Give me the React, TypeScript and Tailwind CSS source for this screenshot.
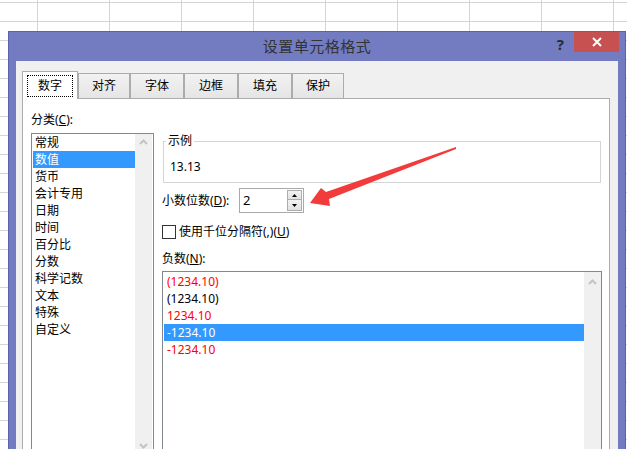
const categories = ['常规', '数值', '货币', '会计专用', '日期', '时间', '百分比', '分数', '科学记数', '文本', '特殊', '自定义'];

const negatives = [
    { text: '(1234.10)', red: true },
    { text: '(1234.10)', red: false },
    { text: '1234.10', red: true },
    { text: '-1234.10', red: false, selected: true },
    { text: '-1234.10', red: true },
];

const tabs = [
    { label: '对齐', w: 'w-[52px]' },
    { label: '字体', w: 'w-[54px]' },
    { label: '边框', w: 'w-[54px]' },
    { label: '填充', w: 'w-[54px]' },
    { label: '保护', w: 'w-[52px]' },
];

function Caret({ down }: { down?: boolean }) {
    return (
        <svg width="9" height="6" viewBox="0 0 9 6" className={down ? 'rotate-180' : ''}>
            <path d="M1 5 L4.5 1.5 L8 5" fill="none" stroke="#c4c4c4" strokeWidth="2" />
        </svg>
    );
}

function Scrollbar() {
    return (
        <div className="w-[17px] bg-[#f0f0f0] flex flex-col items-center justify-between py-[5px] shrink-0">
            <Caret />
            <Caret down />
        </div>
    );
}

export default function App() {
    return (
        <div className="relative w-[627px] h-[449px] overflow-hidden bg-white bg-[linear-gradient(to_right,#d4d4d4_1px,transparent_1px),linear-gradient(to_bottom,#d4d4d4_1px,transparent_1px)] bg-[size:72px_19px] bg-[position:37px_2px] font-['Noto_Sans','Noto_Sans_CJK_SC',sans-serif] text-[12px] text-black">
            {/* Dialog window */}
            <div className="absolute left-[8px] top-[31px] w-[618px] h-[440px] bg-[#737cc1] border border-[#5c63a8] flex flex-col">
                {/* Title bar */}
                <div className="relative h-[29px] flex items-center justify-center shrink-0">
                    <span className="text-[15px] text-[#333] tracking-[0.5px]">设置单元格格式</span>
                    <span className="absolute right-[61px] top-[1px] text-[15px] font-bold text-[#2b2b2b]">?</span>
                    <div className="absolute right-[6px] top-0 w-[45px] h-[20px] bg-[#c75050] flex items-center justify-center">
                        <svg width="10" height="10" viewBox="0 0 10 10">
                            <path d="M1 1 L9 9 M9 1 L1 9" stroke="#fff" strokeWidth="2" />
                        </svg>
                    </div>
                </div>

                {/* Body */}
                <div className="flex-1 mx-[7px] bg-[#f0f0f0] pt-[10px] pl-[6px] pr-[8px] flex flex-col">
                    {/* Tabs */}
                    <div className="flex items-end h-[27px] shrink-0">
                        <div className="relative z-10 w-[56px] h-[28px] -mb-[1px] bg-white border-x border-t border-[#acacac] flex items-center justify-center">
                            <span className="border border-dotted border-black px-[10px] py-[2px] leading-[16px]">数字</span>
                        </div>
                        {tabs.map((t) => (
                            <div
                                key={t.label}
                                className={`${t.w} h-[25px] bg-[linear-gradient(#f2f2f2,#e5e5e5)] border-x border-t border-[#acacac] flex items-center justify-center`}
                            >
                                {t.label}
                            </div>
                        ))}
                    </div>

                    {/* Tab panel */}
                    <div className="flex-1 bg-white border border-b-0 border-[#acacac] pl-[8px] flex">
                        {/* Category list */}
                        <div className="w-[123px] pt-[12px] shrink-0">
                            <div className="leading-[18px]">
                                分类(<span className="underline">C</span>):
                            </div>
                            <div className="mt-[4px] h-[322px] border border-[#828790] flex">
                                <div className="flex-1">
                                    {categories.map((c) => (
                                        <div
                                            key={c}
                                            className={
                                                c === '数值'
                                                    ? 'ml-[1px] pl-[2px] leading-[17px] bg-[#3399ff] text-white'
                                                    : 'ml-[1px] pl-[2px] leading-[17px]'
                                            }
                                        >
                                            {c}
                                        </div>
                                    ))}
                                </div>
                                <Scrollbar />
                                <div className="w-[1px]" />
                            </div>
                        </div>

                        {/* Right side */}
                        <div className="ml-[8px] w-[440px] pt-[34px]">
                            <fieldset className="ml-[1px] w-[438px] h-[50px] border border-[#d5d5d5]">
                                <legend className="ml-[2px] px-[2px] leading-[16px]">示例</legend>
                                <div className="pl-[6px] pt-[10px] leading-[16px]">13.13</div>
                            </fieldset>

                            <div className="mt-[5px] flex items-center h-[25px]">
                                <span className="w-[77px]">
                                    小数位数(<span className="underline">D</span>):
                                </span>
                                <div className="relative w-[65px] h-[25px] border border-[#a9a9a9] flex items-center pl-[3px]">
                                    <span className="text-[13px]">2</span>
                                    <div className="absolute right-[1px] top-[1px] w-[15px] flex flex-col">
                                        <div className="h-[10px] border border-[#acacac] bg-[linear-gradient(#f2f2f2,#e2e2e2)] flex items-center justify-center">
                                            <svg width="5" height="3" viewBox="0 0 5 3"><path d="M0 3 L2.5 0 L5 3 Z" fill="#000" /></svg>
                                        </div>
                                        <div className="h-[11px] border border-t-0 border-[#acacac] bg-[linear-gradient(#f2f2f2,#e2e2e2)] flex items-center justify-center">
                                            <svg width="5" height="3" viewBox="0 0 5 3"><path d="M0 0 L2.5 3 L5 0 Z" fill="#000" /></svg>
                                        </div>
                                    </div>
                                </div>
                            </div>

                            <div className="mt-[12px] flex items-center gap-[3px]">
                                <div className="w-[14px] h-[14px] border border-[#333] bg-white" />
                                <span className="leading-[14px]">
                                    使用千位分隔符(,)(<span className="underline">U</span>)
                                </span>
                            </div>

                            <div className="mt-[11px] leading-[18px]">
                                负数(<span className="underline">N</span>):
                            </div>
                            <div className="mt-[3px] h-[200px] border border-[#828790] flex">
                                <div className="flex-1 pt-[1px]">
                                    {negatives.map((n, i) => (
                                        <div
                                            key={i}
                                            className={
                                                n.selected
                                                    ? 'ml-[1px] pl-[3px] leading-[17px] bg-[#3399ff] text-white'
                                                    : n.red
                                                      ? 'ml-[1px] pl-[3px] leading-[17px] text-[#ff0000]'
                                                      : 'ml-[1px] pl-[3px] leading-[17px]'
                                            }
                                        >
                                            {n.text}
                                        </div>
                                    ))}
                                </div>
                                <div className="w-[17px] bg-[#f0f0f0] flex justify-center pt-[7px]">
                                    <Caret />
                                </div>
                            </div>
                        </div>
                    </div>
                </div>
            </div>

            {/* Red annotation arrow */}
            <svg className="absolute inset-0 pointer-events-none" width="627" height="449" viewBox="0 0 627 449">
                <polygon points="456,147 326,192 321,188 310,203 330,206 329,199 456,149" fill="#f23b3b" />
            </svg>
        </div>
    );
}
